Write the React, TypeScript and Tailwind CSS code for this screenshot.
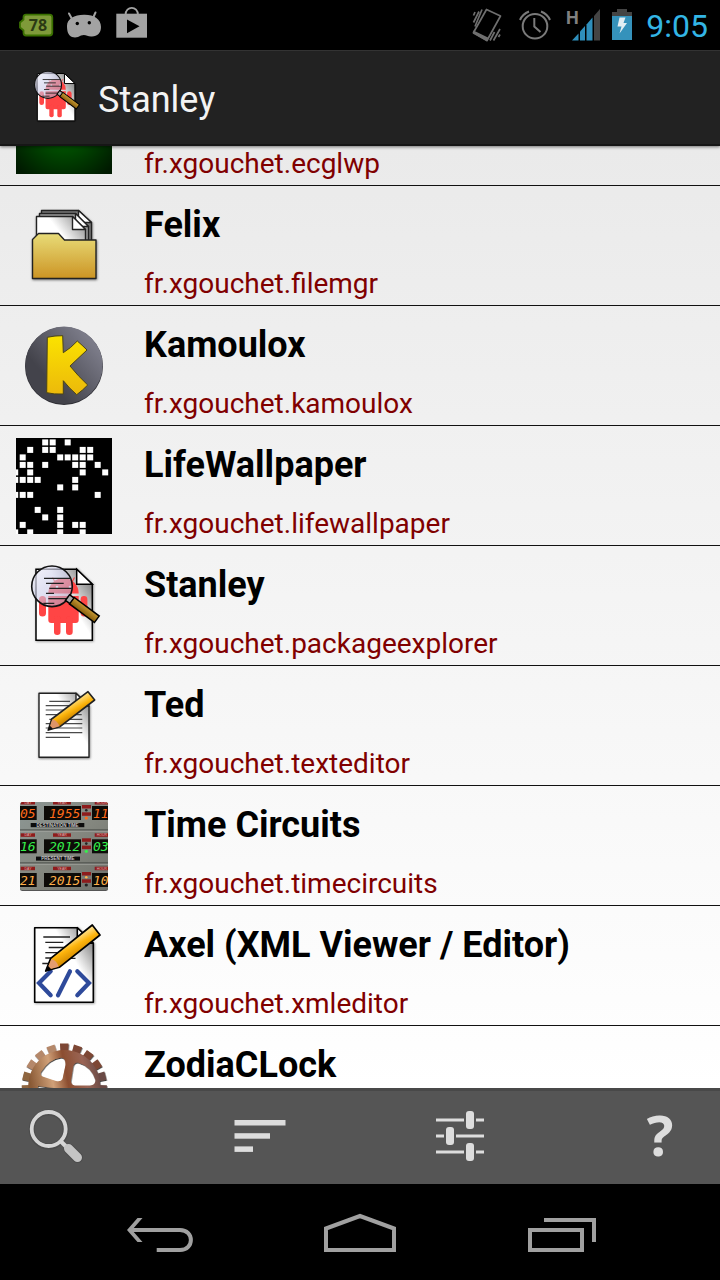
import { useLayoutEffect, useRef } from 'react';
import type { ReactNode } from 'react';

const ICON = 'block size-24 shrink-0';

function EcgIcon() {
  return (
    <svg viewBox="0 0 96 96" className={ICON} aria-hidden="true">
      <defs>
        <radialGradient id="ecg-glow" cx="50%" cy="50%" r="65%">
          <stop offset="0" stopColor="#006a00" />
          <stop offset="1" stopColor="#001a00" />
        </radialGradient>
      </defs>
      <rect width="96" height="96" fill="url(#ecg-glow)" />
    </svg>
  );
}

function FolderIcon() {
  return (
    <svg viewBox="0 0 96 96" className={ICON} aria-hidden="true">
      <defs>
        <linearGradient id="folder-front" x1="0" y1="0" x2="0" y2="1">
          <stop offset="0" stopColor="#e8dc78" />
          <stop offset="1" stopColor="#cc9424" />
        </linearGradient>
        <linearGradient id="folder-paper" x1="0" y1="0.6" x2="1" y2="0.2">
          <stop offset="0.4" stopColor="#fff" />
          <stop offset="1" stopColor="#8a8a8a" />
        </linearGradient>
        <filter id="folder-shadow" x="-20%" y="-20%" width="140%" height="140%">
          <feDropShadow dx="0.500" dy="1" stdDeviation="1" floodOpacity="0.5" />
        </filter>
      </defs>
      <g stroke="#222" strokeWidth="1.4" strokeLinejoin="round" filter="url(#folder-shadow)">
        <path d="M25.500 44V12.500H62.500L75.500 24.500V44Z" fill="#777" />
        <path d="M62.500 12.500V24.500H75.500Z" fill="#fff" />
        <path d="M23.500 44V15.500H59.500L72.500 28.500V44Z" fill="#999" />
        <path d="M59.500 15.500V28.500H72.500Z" fill="#fff" />
        <path d="M20.500 44V18.500H56.500L69.500 31.500V44Z" fill="url(#folder-paper)" />
        <path d="M56.500 18.500V31.500H69.500Z" fill="#fff" />
        <path d="M16.500 80.500V41.500L22.500 35.500H42.500L48.500 42H80V80.500Z" fill="url(#folder-front)" />
      </g>
    </svg>
  );
}

function KamoulouxIcon() {
  return (
    <svg viewBox="0 0 96 96" className={ICON} aria-hidden="true">
      <defs>
        <linearGradient id="k-disc" x1="0.15" y1="0.8" x2="0.85" y2="0.2">
          <stop offset="0.2" stopColor="#43434b" />
          <stop offset="1" stopColor="#7b7b88" />
        </linearGradient>
        <linearGradient id="k-mark" x1="0" y1="0" x2="0" y2="1">
          <stop offset="0" stopColor="#fbe300" />
          <stop offset="1" stopColor="#ecb90b" />
        </linearGradient>
      </defs>
      <circle cx="48" cy="48" r="39" fill="#2e2e34" />
      <circle cx="48" cy="47.300" r="38.700" fill="url(#k-disc)" />
      <path
        d="M31.300 19.300Q39 17.500 46.700 17.700L47.300 34.700Q55 30 61.300 23Q66 27 71 32L54 48Q62 58 71.700 67Q67 72 60.700 76.700Q53 70 47.300 62.700V76Q38 76.500 30.700 74.700Z"
        fill="url(#k-mark)"
        stroke="#4a4418"
        strokeWidth="1"
      />
    </svg>
  );
}

const LIFE_ROWS = [
  [4, 5, 7],
  [2, 4, 5, 9, 10],
  [1, 6, 7, 8, 9, 10],
  [1, 2, 4, 8, 9, 11],
  [0, 2, 9, 12],
  [0, 1, 2, 3, 8],
  [6, 8],
  [0, 1, 2, 11],
  [],
  [3, 6],
  [4, 6],
  [1, 6, 8, 9],
  [0, 2, 6, 9],
];

function LifeIcon() {
  return (
    <svg viewBox="0 0 96 96" className={ICON} aria-hidden="true">
      <rect width="96" height="96" fill="#000" />
      {LIFE_ROWS.map((cells, row) =>
        cells.map((col) => (
          <rect key={`${row}-${col}`} x={3.7 + 7.5 * (col - 1)} y={1.4 + 7.5 * row} width="6" height="6" fill="#fff" />
        )),
      )}
    </svg>
  );
}

function StanleyIcon({ className, id }: { className: string; id: string }) {
  return (
    <svg viewBox="0 0 96 96" className={className} aria-hidden="true">
      <defs>
        <linearGradient id={`${id}-page`} x1="0.3" y1="0.4" x2="0.8" y2="0">
          <stop offset="0.3" stopColor="#fff" />
          <stop offset="1" stopColor="#8a8a8a" />
        </linearGradient>
        <linearGradient id={`${id}-lens`} x1="0" y1="0" x2="1" y2="1">
          <stop offset="0" stopColor="#f4f4fb" stopOpacity="0.8" />
          <stop offset="0.5" stopColor="#c9cbe8" stopOpacity="0.6" />
          <stop offset="1" stopColor="#b487a4" stopOpacity="0.7" />
        </linearGradient>
        <linearGradient id={`${id}-wood`} x1="0" y1="0" x2="0" y2="1">
          <stop offset="0" stopColor="#c79a35" />
          <stop offset="1" stopColor="#855d0c" />
        </linearGradient>
        <filter id={`${id}-shadow`} x="-20%" y="-20%" width="140%" height="140%">
          <feDropShadow dx="0.700" dy="0.700" stdDeviation="1" floodOpacity="0.4" />
        </filter>
      </defs>
      <g filter={`url(#${id}-shadow)`}>
        <path d="M20 11.300H60.700L76.300 26.300V82.300H20Z" fill={`url(#${id}-page)`} stroke="#000" strokeWidth="1.500" />
        <g fill="#ff4444">
          <path d="M32.300 35.500A15.200 15.500 0 0 1 62.700 35.500Z" />
          <path d="M32.300 38H62.700V62A3 3 0 0 1 59.700 65H35.300A3 3 0 0 1 32.300 62Z" />
          <rect x="38" y="58" width="6.500" height="19" rx="3.200" />
          <rect x="50" y="58" width="6.700" height="19" rx="3.300" />
          <rect x="23" y="38" width="7" height="20.500" rx="3.500" />
          <rect x="64.600" y="38" width="6.800" height="20.500" rx="3.400" />
        </g>
        <path d="M39 24L36.500 19.500M56 24L58.500 19.500" stroke="#ff4444" strokeWidth="1.200" />
        <circle cx="41" cy="29" r="1.300" fill="#fff" />
        <circle cx="54" cy="29" r="1.300" fill="#fff" />
        <path d="M60.700 11.300V26.300H76.300Z" fill="#fff" stroke="#000" strokeWidth="1.500" />
      </g>
      <circle cx="36" cy="28.300" r="20.300" fill={`url(#${id}-lens)`} stroke="#111" strokeWidth="1.600" />
      <path
        d="M28 20.300H55M30 25.300H47.700M33.300 30.300H55.700M30 35.300H38M32.300 40.700H54.500M27.300 45.300H38.300"
        stroke="#222"
        strokeWidth="1.300"
      />
      <g transform="translate(51.500 39.500) rotate(36.500)" stroke="#000" strokeWidth="1.500">
        <rect x="0" y="-3.500" width="6" height="7" fill="#aaa" />
        <rect x="5.500" y="-4" width="31" height="8" fill={`url(#${id}-wood)`} />
      </g>
    </svg>
  );
}

function TedIcon() {
  return (
    <svg viewBox="0 0 96 96" className={ICON} aria-hidden="true">
      <defs>
        <linearGradient id="ted-page" x1="0.4" y1="0.4" x2="0.9" y2="0">
          <stop offset="0.3" stopColor="#fff" />
          <stop offset="1" stopColor="#888" />
        </linearGradient>
        <linearGradient id="ted-pencil" x1="0.4" y1="0.35" x2="0.6" y2="0.65">
          <stop offset="0" stopColor="#ffdc78" />
          <stop offset="0.5" stopColor="#fbb208" />
          <stop offset="1" stopColor="#c77f00" />
        </linearGradient>
        <filter id="ted-shadow" x="-20%" y="-20%" width="140%" height="140%">
          <feDropShadow dx="0.500" dy="0.800" stdDeviation="1" floodOpacity="0.5" />
        </filter>
      </defs>
      <g filter="url(#ted-shadow)" stroke="#222" strokeWidth="1.400" strokeLinejoin="round">
        <path d="M23 15.300H60L73 28V79.300H23Z" fill="url(#ted-page)" />
        <path d="M60 15.300V28H73Z" fill="#fff" />
      </g>
      <path
        d="M33.300 23.300H54M29.700 27.700H65.700M29.700 32H65.700M29.700 36.700H65.700M33.300 41.300H66.300M29.700 45.700H66.300M29.700 50H66.300M29.700 54.700H66.300M29.700 59.300H54"
        stroke="#4a4a4a"
        strokeWidth="1.200"
      />
      <path d="M32.300 52L35.700 41L72 13.700L78.700 22L44 48.700Z" fill="url(#ted-pencil)" stroke="#222" strokeWidth="1.600" strokeLinejoin="round" />
      <path d="M33 51.500L36.200 41.500Q41 42 43.500 48.300Z" fill="#dd9468" />
      <path d="M31.500 52.700L33.600 47.500L37 50.800Z" fill="#111" />
    </svg>
  );
}

const CIRCUITS = [
  { y: 8, label: 3, color: '#ff6a1a', left: '05', year: '1955', right: '11' },
  { y: 41.3, label: 35.3, color: '#35f04c', left: '16', year: '2012', right: '03' },
  { y: 75, label: 68.7, color: '#ffb04a', left: '21', year: '2015', right: '10' },
];

function CircuitsIcon() {
  return (
    <svg viewBox="0 0 96 96" className={ICON} aria-hidden="true">
      <defs>
        <clipPath id="tc-clip">
          <rect x="4" y="4" width="88" height="88" rx="2.500" />
        </clipPath>
        <linearGradient id="tc-metal" x1="0" y1="0" x2="1" y2="1">
          <stop offset="0" stopColor="#8d9896" />
          <stop offset="0.5" stopColor="#858880" />
          <stop offset="1" stopColor="#6c6e68" />
        </linearGradient>
      </defs>
      <rect x="4" y="5" width="88" height="88" rx="2.500" fill="#555" />
      <g clipPath="url(#tc-clip)">
        <rect width="96" height="96" fill="url(#tc-metal)" />
        <path d="M0 32H96M0 65H96" stroke="#3d403d" strokeWidth="1.200" />
        <path d="M0 33.200H96M0 66.200H96" stroke="#a9aca6" strokeWidth="0.800" />
        {CIRCUITS.map((c) => (
          <g key={c.year}>
            <rect x="4.700" y={c.label} width="14.300" height="3.500" fill="#8e1c1c" />
            <rect x="37" y={c.label} width="18" height="3.500" fill="#8e1c1c" />
            <rect x="78.700" y={c.label} width="14" height="3.500" fill="#8e1c1c" />
            <g fontFamily="Liberation Sans, sans-serif" fontSize="3.500" fill="#e0b0b0" textAnchor="middle">
              <text x="12" y={c.label + 3}>DAY</text>
              <text x="46" y={c.label + 3}>YEAR</text>
              <text x="86" y={c.label + 3}>HOUR</text>
            </g>
            <g fill="#0d0b08">
              <rect x="0" y={c.y} width="20.700" height="14" />
              <rect x="28" y={c.y} width="37" height="14" />
              <rect x="76" y={c.y} width="20" height="14" />
            </g>
            <g fill={c.color} fontFamily="DejaVu Sans Mono, monospace" fontSize="13" fontStyle="oblique">
              <text x="4" y={c.y + 12}>{c.left}</text>
              <text x="33" y={c.y + 12}>{c.year}</text>
              <text x="77" y={c.y + 12}>{c.right}</text>
            </g>
            <rect x="66" y={c.y - 1} width="9" height="3.500" fill="#8e1c1c" />
            <rect x="66" y={c.y + 6.300} width="9" height="3.500" fill="#8e1c1c" />
            <circle cx="70.300" cy={c.y + 4.300} r="1.300" fill={c.year === '2015' ? c.color : '#222'} />
            <circle cx="70.300" cy={c.y + 12} r="1.600" fill={c.year === '2015' ? '#222' : c.color} />
          </g>
        ))}
        <rect x="14.700" y="25" width="53.600" height="4.200" fill="#0c0c0c" />
        <rect x="20" y="58.600" width="44" height="4" fill="#0c0c0c" />
        <g fontFamily="Liberation Sans, sans-serif" fontSize="4.500" fontWeight="700" fill="#c8c8c8" textAnchor="middle">
          <text x="41.500" y="28.800">DESTINATION TIME</text>
          <text x="42" y="62.200">PRESENT TIME</text>
        </g>
      </g>
    </svg>
  );
}

function AxelIcon() {
  return (
    <svg viewBox="0 0 96 96" className={ICON} aria-hidden="true">
      <defs>
        <linearGradient id="axel-page" x1="0.4" y1="0.4" x2="0.9" y2="0">
          <stop offset="0.3" stopColor="#fff" />
          <stop offset="1" stopColor="#777" />
        </linearGradient>
        <linearGradient id="axel-pencil" x1="0.4" y1="0.35" x2="0.6" y2="0.65">
          <stop offset="0" stopColor="#ffe08a" />
          <stop offset="0.45" stopColor="#fdb40c" />
          <stop offset="1" stopColor="#d58c00" />
        </linearGradient>
        <filter id="axel-shadow" x="-20%" y="-20%" width="140%" height="140%">
          <feDropShadow dx="0.800" dy="0.800" stdDeviation="1" floodOpacity="0.4" />
        </filter>
      </defs>
      <g filter="url(#axel-shadow)" stroke="#000" strokeWidth="1.600" strokeLinejoin="round">
        <path d="M18.700 9.700H61.300L77.300 25.300V84.300H18.700Z" fill="url(#axel-page)" />
        <path d="M61.300 9.700V25.300H77.300Z" fill="#fff" />
      </g>
      <path
        d="M27.300 19H54M29.300 24.300H47.300M32.700 29.500H52M29.300 34.700H48M29.300 40H44M26.300 45.500H36M50 40.300H59.500"
        stroke="#222"
        strokeWidth="1.300"
      />
      <g fill="none" stroke="#2e4a9b" strokeWidth="4.200" strokeLinecap="round">
        <path d="M34.700 53.300L23 65L34.700 77.300" />
        <path d="M54 53.300L42 77.300" />
        <path d="M61.300 53.300L73 65L61.300 77.300" />
      </g>
      <path d="M29.700 53L34.700 40.300L76.300 7L84 17L43.300 49.300Z" fill="url(#axel-pencil)" stroke="#000" strokeWidth="1.700" strokeLinejoin="round" />
      <path d="M30.800 52L35.400 40.900Q41 42.500 42.700 48.800Z" fill="#e39c70" />
      <path d="M29 53.700L31.700 47.500L35.500 51.600Z" fill="#000" />
    </svg>
  );
}

const TEETH = Array.from({ length: 19 }, (_, i) => (i * 360) / 19);

function GearIcon() {
  return (
    <svg viewBox="0 0 96 96" className={ICON} aria-hidden="true">
      <defs>
        <linearGradient id="gear-rust" x1="0" y1="0.3" x2="1" y2="0.1">
          <stop offset="0" stopColor="#8a5a36" />
          <stop offset="0.3" stopColor="#d0a078" />
          <stop offset="0.5" stopColor="#8c4e30" />
          <stop offset="0.75" stopColor="#9a6555" />
          <stop offset="1" stopColor="#5e4444" />
        </linearGradient>
        <filter id="gear-shadow" x="-10%" y="-10%" width="120%" height="120%">
          <feDropShadow dx="0.500" dy="1" stdDeviation="0.700" floodOpacity="0.8" />
        </filter>
      </defs>
      <g filter="url(#gear-shadow)">
        {TEETH.map((angle, i) => (
          <path
            key={angle}
            d="M44.500 14L44 5.600H52.500L52 14Z"
            transform={`rotate(${angle} 48.300 48)`}
            fill={i < 4 ? '#7d4634' : i < 10 ? '#6a4a44' : i > 15 ? '#b5886a' : '#8f6640'}
          />
        ))}
        <path
          fillRule="evenodd"
          fill="url(#gear-rust)"
          d="M48.300 12A36 36 0 1 1 48.290 12ZM25 34Q33 21 45 19.500Q50 20 49.500 27L46.500 41Q45 44 40 43L28 39Q23.500 37.500 25 34ZM62 24.500Q75 28 79.500 42Q79.500 47 74 47.500H59Q54.500 47 55 42L57 29Q58 24 62 24.500ZM22 48L38 50L45 58L40 76Q21 70 22 48ZM56 54H76Q72 72 55 76Z"
        />
      </g>
    </svg>
  );
}

const APPS: { name?: string; pkg: string; icon: ReactNode }[] = [
  { pkg: 'fr.xgouchet.ecglwp', icon: <EcgIcon /> },
  { name: 'Felix', pkg: 'fr.xgouchet.filemgr', icon: <FolderIcon /> },
  { name: 'Kamoulox', pkg: 'fr.xgouchet.kamoulox', icon: <KamoulouxIcon /> },
  { name: 'LifeWallpaper', pkg: 'fr.xgouchet.lifewallpaper', icon: <LifeIcon /> },
  { name: 'Stanley', pkg: 'fr.xgouchet.packageexplorer', icon: <StanleyIcon className={ICON} id="row" /> },
  { name: 'Ted', pkg: 'fr.xgouchet.texteditor', icon: <TedIcon /> },
  { name: 'Time Circuits', pkg: 'fr.xgouchet.timecircuits', icon: <CircuitsIcon /> },
  { name: 'Axel (XML Viewer / Editor)', pkg: 'fr.xgouchet.xmleditor', icon: <AxelIcon /> },
  { name: 'ZodiaCLock', pkg: 'fr.xgouchet.zodiaclock', icon: <GearIcon /> },
];

function StatusBar() {
  return (
    <div className="flex h-[50px] shrink-0 items-center justify-between bg-black pl-4 pr-3">
      <div className="flex items-center gap-2">
        <svg viewBox="16 0 40 50" className="block h-[50px] w-10" aria-hidden="true">
          <path
            d="M26 14.700H49.500Q52.300 14.700 52.300 17.500V32.800Q52.300 35.500 49.500 35.500H26Q23.500 35.500 23.500 32.500V30.500L20 27.500V22.500L23.500 19.500V17.500Q23.500 14.700 26 14.700Z"
            fill="#7f9a3a"
            stroke="#3a7000"
            strokeWidth="1.800"
          />
          <text x="38" y="31" textAnchor="middle" fontFamily="Open Sans, sans-serif" fontSize="16" fontWeight="700" fill="#2b3a14">
            78
          </text>
        </svg>
        <svg viewBox="64 0 40 50" className="block h-[50px] w-10" aria-hidden="true">
          <path
            d="M69 13.500L72 19M95.500 12.500L93 18"
            stroke="#a3a3a3"
            strokeWidth="2"
            strokeLinecap="round"
          />
          <path
            d="M84 14.700C94 14.500 101 19 101 27C101 33 97 37 91 36.500C87 36 85 34 81 35.500C78 37.500 75 38 72 37C68 35 67 31 67 26C67 19 74 14.700 84 14.700Z"
            fill="#a3a3a3"
          />
          <circle cx="77.300" cy="23.500" r="1.700" fill="#000" />
          <circle cx="89.300" cy="22.700" r="1.700" fill="#000" />
        </svg>
        <svg viewBox="112 0 40 50" className="block h-[50px] w-10" aria-hidden="true">
          <path d="M125.500 15C125.500 5.500 138 5.500 138 15" fill="none" stroke="#a3a3a3" strokeWidth="1.800" />
          <rect x="116.300" y="13.700" width="30.700" height="24" fill="#a3a3a3" />
          <path d="M127 19.500L139.500 26.300L127 33.300Z" fill="#000" />
        </svg>
      </div>
      <div className="flex items-center gap-2">
        <svg viewBox="466 0 40 50" className="block h-[50px] w-10" aria-hidden="true">
          <g fill="none" stroke="#6f6f6f" strokeWidth="1.700">
            <path d="M486.500 9.500L500.500 16L487 40.500L473.500 32.500Z" strokeLinejoin="round" />
            <path d="M473.500 15.500L475 12M473.500 22.500L479 11.500M475 26.500L482 9.500M490 40.500L494.500 32M493.500 40.500L500 29M498.500 37L500 34.500" />
          </g>
          <path d="M473.500 30.500L489 38L487 41.500L472.700 33.500Z" fill="#6f6f6f" />
        </svg>
        <svg viewBox="514 0 40 50" className="block h-[50px] w-10" aria-hidden="true">
          <g fill="none" stroke="#7a7a7a" strokeWidth="2">
            <circle cx="535" cy="26.200" r="12.300" />
            <path d="M534.300 18V26.500L540.500 32" />
            <path d="M520 20Q522.500 14 529 11.500M541 11.500Q547.500 14 550 20" />
          </g>
        </svg>
        <svg viewBox="562 0 40 50" className="block h-[50px] w-10" aria-hidden="true">
          <text x="566" y="23.500" fontFamily="Roboto, sans-serif" fontSize="18" fontWeight="700" fill="#808080">
            H
          </text>
          <g fill="#2f8fbc">
            <path d="M572 40.500L578.500 33.500V40.500Z" />
            <path d="M580 40.500V31.500L585 26V40.500Z" />
            <path d="M586.500 40.500V24.500L592.500 17.500V40.500Z" />
          </g>
          <path d="M594 40.500V16L600 9V40.500Z" fill="#444" />
        </svg>
        <div className="flex items-center gap-3">
          <svg viewBox="610 0 24 50" className="block h-[50px] w-6" aria-hidden="true">
            <path d="M612 16V12H617V9H627V12H632V16Z" fill="#444" />
            <rect x="612" y="16" width="20" height="24" fill="#3592bb" />
            <path d="M619.500 17.500H625.500L623.500 23H627L619.500 33.500L621.500 26.500H617.500Z" fill="#e2eef3" />
          </svg>
          <span className="pt-0.5 text-[32px] leading-10 text-[#33b5e5]">9:05</span>
        </div>
      </div>
    </div>
  );
}

function AppList() {
  const listRef = useRef<HTMLUListElement>(null);

  useLayoutEffect(() => {
    if (listRef.current) listRef.current.scrollTop = 80;
  }, []);

  return (
    <ul
      ref={listRef}
      className="min-h-0 flex-1 overflow-y-auto bg-linear-to-b from-[#eaeaea] to-white [scrollbar-width:none]"
    >
      {APPS.map((app) => (
        <li key={app.pkg} className="flex h-[120px] items-start gap-8 border-b border-[#111] px-4 pt-3">
          {app.icon}
          <div className="min-w-0 flex-1">
            <div className="h-[54px]">
              {app.name && <h2 className="truncate text-4xl leading-[54px] font-bold text-black">{app.name}</h2>}
            </div>
            <p className="truncate pt-3.5 text-[28px] leading-9 text-[#800000]">{app.pkg}</p>
          </div>
        </li>
      ))}
    </ul>
  );
}

function Toolbar() {
  const button = 'flex w-[120px] items-center justify-center';
  return (
    <div className="flex h-24 shrink-0 items-stretch justify-between bg-[#555] shadow-[inset_0_3px_0_#484848]">
      <button type="button" aria-label="Search" className={button}>
        <svg viewBox="28 1104 64 64" className="block size-16" aria-hidden="true">
          <g fill="none" stroke="#444" strokeLinecap="round" opacity="0.5">
            <circle cx="48.700" cy="1129.500" r="17" strokeWidth="6" />
            <path d="M69 1149L77.500 1157.500" strokeWidth="11" />
          </g>
          <g fill="none" stroke="#d6d6d6">
            <circle cx="48.700" cy="1129" r="17" strokeWidth="3.800" />
            <path d="M60.500 1141L67 1147.500" strokeWidth="4" />
            <path d="M68.500 1148.500L77.500 1157.500" stroke="#c4c4c4" strokeWidth="9" strokeLinecap="round" />
          </g>
        </svg>
      </button>
      <button type="button" aria-label="Sort" className={button}>
        <svg viewBox="228 1104 64 64" className="block size-16" fill="#ddd" aria-hidden="true">
          <rect x="234.500" y="1120" width="51" height="5.500" />
          <rect x="234.500" y="1133.200" width="35.500" height="5.500" />
          <rect x="234.500" y="1146.400" width="18.500" height="5.500" />
        </svg>
      </button>
      <button type="button" aria-label="Filters" className={button}>
        <svg viewBox="428 1104 64 64" className="block size-16" fill="#ddd" aria-hidden="true">
          <path d="M436 1120H464M476 1120H484M436 1136H444M456 1136H484M436 1152H464M476 1152H484" stroke="#ddd" strokeWidth="3" />
          <rect x="466" y="1111" width="8" height="18" rx="3" />
          <rect x="446" y="1127" width="8" height="18" rx="3" />
          <rect x="466" y="1143" width="8" height="18" rx="3" />
        </svg>
      </button>
      <button
        type="button"
        aria-label="Help"
        className="flex w-[120px] items-center justify-center pb-1 font-['Open_Sans',sans-serif] text-[56px] leading-[60px] font-bold text-[#ddd]"
      >
        ?
      </button>
    </div>
  );
}

function NavBar() {
  const button = 'flex w-[200px] items-center justify-center';
  return (
    <nav className="flex h-24 shrink-0 items-stretch justify-center bg-black">
      <button type="button" aria-label="Back" className={button}>
        <svg viewBox="120 1208 80 48" className="block h-12 w-20" fill="none" stroke="#a0a0a0" strokeWidth="4" aria-hidden="true">
          <path d="M130 1230H180C194.500 1230 194.500 1250 180 1250H156.700" />
          <path d="M142.500 1218H137.500L127 1230L137.500 1242H142.500L132 1230Z" fill="#a0a0a0" stroke="none" />
        </svg>
      </button>
      <button type="button" aria-label="Home" className={button}>
        <svg viewBox="320 1208 80 48" className="block h-12 w-20" fill="none" stroke="#a0a0a0" strokeWidth="4" aria-hidden="true">
          <path d="M326 1250V1228.500L360 1216L394 1228.500V1250Z" />
        </svg>
      </button>
      <button type="button" aria-label="Recent apps" className={button}>
        <svg viewBox="520 1208 80 48" className="block h-12 w-20" fill="none" stroke="#a0a0a0" strokeWidth="4" aria-hidden="true">
          <rect x="530" y="1230" width="52" height="20" />
          <path d="M544 1220H594V1242" />
        </svg>
      </button>
    </nav>
  );
}

export default function App() {
  return (
    <div className="flex h-screen flex-col bg-black font-[Roboto,sans-serif]">
      <StatusBar />
      <header className="z-10 flex h-24 shrink-0 items-center gap-2.5 border-t border-b-2 border-t-[#333] border-b-[#161616] bg-[#222] pl-6 shadow-[0_1px_3px_rgba(0,0,0,0.5)]">
        <StanleyIcon className="block size-16 shrink-0" id="bar" />
        <h1 className="pt-1 text-4xl leading-[48px] text-[#f3f3f3]">Stanley</h1>
      </header>
      <AppList />
      <Toolbar />
      <NavBar />
    </div>
  );
}
